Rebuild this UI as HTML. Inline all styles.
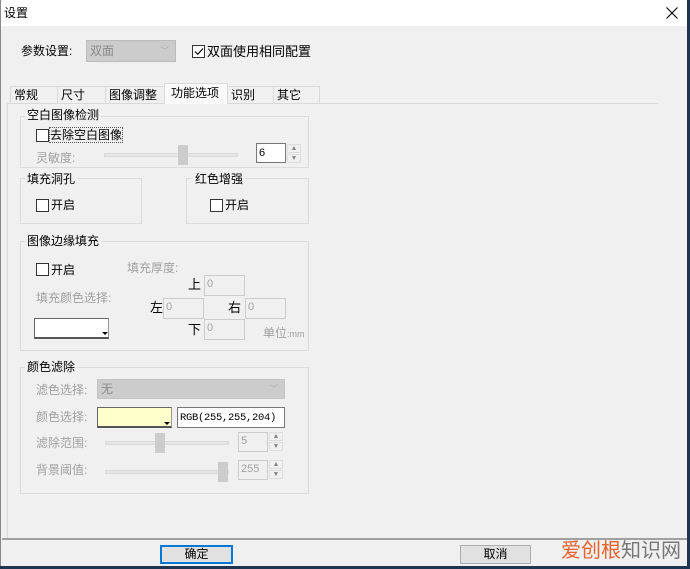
<!DOCTYPE html>
<html><head><meta charset="utf-8"><style>
*{margin:0;padding:0;box-sizing:border-box}
body{width:690px;height:569px;background:#1d3550;position:relative;overflow:hidden;font-family:"Liberation Sans","Noto Sans CJK SC","WenQuanYi Zen Hei",sans-serif;font-size:12px;color:#000}
.a{position:absolute;white-space:nowrap;line-height:14px}
.win{position:absolute;left:0;top:0;width:687px;height:566px;background:#f0f0f0}
.title{position:absolute;left:0;top:0;width:687px;height:26px;background:#fff}
.g{color:#a0a0a0}
.frame{position:absolute;border:1px solid #dcdcdc}
.lab{position:absolute;background:#f0f0f0;padding:0 2px;line-height:14px;white-space:nowrap}
.cb{position:absolute;width:13px;height:13px;border:1px solid #333;background:#fff}
.box{position:absolute;border:1px solid #ccc;background:#f0f0f0;color:#a0a0a0;font-size:11px;padding-left:2px;line-height:16px}
.tab{position:absolute;top:86px;height:17px;border:1px solid #d9d9d9;border-bottom:none;background:#f0f0f0;padding-left:3px;line-height:16px}
.track{position:absolute;height:4px;background:#e6e6e6;border:1px solid #dadada}
.thumb{position:absolute;width:10px;height:20px;background:#ccc}
.arr{position:absolute;width:14px;height:9px;border:1px solid #ddd;background:#f0f0f0;font-size:7px;color:#888;text-align:center;line-height:8px}
</style></head><body>
<div class="win">
<div class="title"></div>
<div class="a" style="left:0;top:0;width:1px;height:566px;background:#888"></div>
<div class="a" style="left:4px;top:6px;font-size:12px">设置</div>
<svg class="a" style="left:666px;top:7px" width="12" height="12"><path d="M0.5 0.5L11.5 11.5M11.5 0.5L0.5 11.5" stroke="#000" stroke-width="1.1"/></svg>

<div class="a" style="left:21px;top:44px">参数设置:</div>
<div class="a" style="left:86px;top:40px;width:90px;height:22px;background:#ccc;border:1px solid #bbb;color:#8a8a8a;padding:3px 0 0 3px">双面<span style="position:absolute;right:6px;top:3px;color:#aaa;font-size:9px">﹀</span></div>
<div class="cb" style="left:192px;top:45px"></div>
<svg class="a" style="left:194px;top:47px" width="10" height="9"><path d="M1 4.5L3.8 7.3L9 1.5" stroke="#000" fill="none" stroke-width="1.2"/></svg>
<div class="a" style="left:207px;top:45px;font-size:13px">双面使用相同配置</div>

<div class="tab" style="left:10px;width:48px">常规</div>
<div class="tab" style="left:57px;width:49px">尺寸</div>
<div class="tab" style="left:105px;width:60px">图像调整</div>
<div class="tab" style="left:227px;width:47px">识别</div>
<div class="tab" style="left:273px;width:47px">其它</div>
<div class="a" style="left:7px;top:103px;width:651px;height:1px;background:#d9d9d9"></div>
<div class="a" style="left:7px;top:103px;width:1px;height:436px;background:#d9d9d9"></div>
<div class="tab" style="left:164px;top:83px;width:64px;height:21px;background:#fafafa;padding-left:6px;line-height:18px">功能选项</div>

<div class="frame" style="left:20px;top:116px;width:289px;height:52px"></div>
<div class="lab" style="left:25px;top:108px">空白图像检测</div>
<div class="cb" style="left:36px;top:129px"></div>
<div class="a" style="left:50px;top:128px;outline:1px dotted #555">去除空白图像</div>
<div class="a g" style="left:36px;top:151px">灵敏度:</div>
<div class="track" style="left:104px;top:153px;width:134px"></div>
<div class="thumb" style="left:178px;top:145px"></div>
<div class="a" style="left:256px;top:143px;width:30px;height:20px;border:1px solid #777;background:#fff;font-size:11px;padding:2px 0 0 2px">6</div>
<div class="arr" style="left:287px;top:144px">▲</div>
<div class="arr" style="left:287px;top:154px">▼</div>

<div class="frame" style="left:20px;top:178px;width:122px;height:46px"></div>
<div class="lab" style="left:25px;top:172px">填充洞孔</div>
<div class="cb" style="left:36px;top:199px"></div>
<div class="a" style="left:51px;top:198px">开启</div>
<div class="frame" style="left:186px;top:178px;width:123px;height:46px"></div>
<div class="lab" style="left:193px;top:172px">红色增强</div>
<div class="cb" style="left:210px;top:199px"></div>
<div class="a" style="left:225px;top:198px">开启</div>

<div class="frame" style="left:20px;top:241px;width:289px;height:110px"></div>
<div class="lab" style="left:25px;top:234px">图像边缘填充</div>
<div class="cb" style="left:36px;top:263px"></div>
<div class="a" style="left:51px;top:263px">开启</div>
<div class="a g" style="left:127px;top:261px">填充厚度:</div>
<div class="a g" style="left:36px;top:291px">填充颜色选择:</div>
<div class="a" style="left:34px;top:318px;width:75px;height:21px;background:#fff;border:1px solid #999;border-top-color:#666;border-left-color:#666;border-bottom:2px solid #555"></div>
<div class="a" style="left:102px;top:332px;width:0;height:0;border-left:3px solid transparent;border-right:3px solid transparent;border-top:3px solid #000"></div>
<div class="a" style="left:188px;top:278px;font-size:13px">上</div>
<div class="box" style="left:204px;top:275px;width:41px;height:21px">0</div>
<div class="a" style="left:150px;top:301px;font-size:13px">左</div>
<div class="box" style="left:163px;top:298px;width:41px;height:21px">0</div>
<div class="a" style="left:228px;top:301px;font-size:13px">右</div>
<div class="box" style="left:245px;top:298px;width:41px;height:21px">0</div>
<div class="a" style="left:188px;top:323px;font-size:13px">下</div>
<div class="box" style="left:204px;top:319px;width:41px;height:21px">0</div>
<div class="a g" style="left:263px;top:326px">单位<span style="font-size:9px">:mm</span></div>

<div class="frame" style="left:20px;top:367px;width:289px;height:127px"></div>
<div class="lab" style="left:25px;top:360px">颜色滤除</div>
<div class="a g" style="left:36px;top:383px">滤色选择:</div>
<div class="a" style="left:97px;top:379px;width:188px;height:20px;background:#ccc;border:1px solid #c4c4c4;color:#8a8a8a;padding:2px 0 0 3px">无<span style="position:absolute;right:6px;top:2px;color:#aaa;font-size:9px">﹀</span></div>
<div class="a g" style="left:36px;top:410px">颜色选择:</div>
<div class="a" style="left:97px;top:407px;width:75px;height:21px;background:#ffffcc;border:1px solid #999;border-top-color:#666;border-left-color:#666;border-bottom:2px solid #555"></div>
<div class="a" style="left:164px;top:422px;width:0;height:0;border-left:3px solid transparent;border-right:3px solid transparent;border-top:3px solid #000"></div>
<div class="a" style="left:177px;top:407px;width:108px;height:21px;background:#fff;border:1px solid #777;font-family:'Liberation Mono',monospace;font-size:10.5px;letter-spacing:-0.3px;padding:3px 0 0 2px;overflow:hidden">RGB(255,255,204)</div>
<div class="a g" style="left:36px;top:436px">滤除范围:</div>
<div class="track" style="left:105px;top:441px;width:124px"></div>
<div class="thumb" style="left:155px;top:433px"></div>
<div class="box" style="left:238px;top:432px;width:30px;height:20px;font-size:11px">5</div>
<div class="arr" style="left:269px;top:432px">▲</div>
<div class="arr" style="left:269px;top:442px">▼</div>
<div class="a g" style="left:36px;top:463px">背景阈值:</div>
<div class="track" style="left:105px;top:470px;width:124px"></div>
<div class="thumb" style="left:218px;top:462px"></div>
<div class="box" style="left:238px;top:460px;width:30px;height:20px;font-size:11px">255</div>
<div class="arr" style="left:269px;top:460px">▲</div>
<div class="arr" style="left:269px;top:470px">▼</div>

<div class="a" style="left:2px;top:538px;width:685px;height:2px;background:#a0a0a0"></div>
<div class="a" style="left:160px;top:545px;width:73px;height:19px;border:2px solid #0078d7;background:#e1e1e1;text-align:center;line-height:15px">确定</div>
<div class="a" style="left:460px;top:545px;width:71px;height:19px;border:1px solid #adadad;background:#e1e1e1;text-align:center;line-height:17px">取消</div>
<div class="a" style="left:561px;top:539px;font-size:20px;line-height:24px;color:#e8612c">爱创根<span style="color:#777">知识网</span></div>
</div>
</body></html>
